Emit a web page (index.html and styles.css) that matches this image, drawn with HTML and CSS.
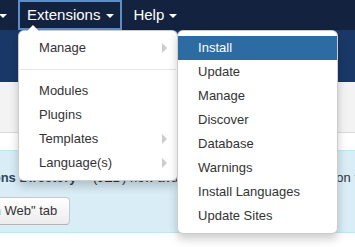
FILE: index.html
```html
<!DOCTYPE html>
<html lang="en">
<head>
<meta charset="utf-8">
<title>Extensions menu</title>
<link rel="stylesheet" href="styles.css">
</head>
<body>
<nav class="navbar">
  <ul class="nav">
    <li class="nav-item"><a class="nav-link">Components<span class="caret"></span></a></li>
    <li class="nav-item">
      <a class="nav-link active">Extensions<span class="caret"></span></a>
      <ul class="dropdown-menu menu-main">
        <li class="submenu"><a>Manage</a>
          <ul class="dropdown-menu menu-sub">
            <li class="hover"><a>Install</a></li>
            <li><a>Update</a></li>
            <li><a>Manage</a></li>
            <li><a>Discover</a></li>
            <li><a>Database</a></li>
            <li><a>Warnings</a></li>
            <li><a>Install Languages</a></li>
            <li><a>Update Sites</a></li>
          </ul>
        </li>
        <li class="divider"></li>
        <li><a>Modules</a></li>
        <li><a>Plugins</a></li>
        <li class="submenu"><a>Templates</a></li>
        <li class="submenu"><a>Language(s)</a></li>
      </ul>
    </li>
    <li class="nav-item"><a class="nav-link help">Help<span class="caret"></span></a></li>
  </ul>
</nav>
<header class="header"></header>
<div class="subhead"></div>
<main class="content">
  <div class="alert">
    <p class="alert-text"><strong>Joomla! Extensions Directory</strong>™&nbsp;(JED) now available with <a class="alert-link">Install from Web</a> on this page.</p>
    <button class="btn" type="button">Add "Install from Web" tab</button>
  </div>
</main>
</body>
</html>
```
FILE: styles.css
```css
* { box-sizing: border-box; }
html, body { margin: 0; padding: 0; }
body {
  width: 355px;
  height: 247px;
  overflow: hidden;
  font-family: "Liberation Sans", Arial, sans-serif;
  font-size: 13px;
  line-height: 18px;
  color: #333;
  background: #fff;
}

/* top navbar */
.navbar {
  height: 30px;
  background: #13233f;
  position: relative;
  z-index: 10;
}
.nav {
  list-style: none;
  margin: 0 0 0 -102px;
  padding: 0;
  display: flex;
  height: 30px;
}
.nav-item { position: relative; }
.nav-link {
  display: flex;
  align-items: center;
  height: 30px;
  padding: 0 11px 0 9px;
  color: #fff;
  font-size: 15px;
}
.nav-link .caret { margin-left: 7px; }
.nav-link.active {
  border: 2px solid #5d8ec6;
  padding: 0 6px 0 7px;
}
.nav-link.active .caret { margin-left: 6px; }
.nav-link.help { padding-left: 11px; }
.nav-link.help .caret { margin-left: 5px; }
.caret {
  width: 0;
  height: 0;
  margin-top: 2px;
  border-top: 4px solid #fff;
  border-left: 4px solid transparent;
  border-right: 4px solid transparent;
}

/* dropdowns */
.dropdown-menu {
  position: absolute;
  list-style: none;
  margin: 0;
  padding: 5px 0;
  background: #fff;
  border: 1px solid rgba(0, 0, 0, 0.2);
  border-radius: 6px;
  box-shadow: 0 5px 10px rgba(0, 0, 0, 0.2);
  z-index: 20;
}
.dropdown-menu li { position: relative; }
.dropdown-menu a {
  display: block;
  padding: 3px 20px;
  color: #333;
  white-space: nowrap;
}
.menu-main {
  top: 100%;
  left: 0;
  width: 160px;
}
.menu-main::before {
  content: "";
  position: absolute;
  top: -7px;
  left: 7px;
  border-left: 7px solid transparent;
  border-right: 7px solid transparent;
  border-bottom: 7px solid rgba(0, 0, 0, 0.2);
}
.menu-main::after {
  content: "";
  position: absolute;
  top: -6px;
  left: 8px;
  border-left: 6px solid transparent;
  border-right: 6px solid transparent;
  border-bottom: 6px solid #fff;
}
.menu-sub {
  top: -6px;
  left: 100%;
  width: 161px;
}
.submenu > a::after {
  content: "";
  position: absolute;
  top: 7px;
  right: 10px;
  border-top: 5px solid transparent;
  border-bottom: 5px solid transparent;
  border-left: 5px solid #ccc;
}
.dropdown-menu .hover > a {
  background: #2d6ca2;
  color: #fff;
}
.divider {
  height: 1px;
  margin: 9px 1px;
  background: #e5e5e5;
}

/* page bands */
.header {
  height: 52px;
  background: #1a3867;
}
.subhead {
  height: 51px;
  background: #f3f3f3;
  border-bottom: 1px solid #dadada;
}
.content { padding-top: 17px; }

.alert {
  margin-left: -122px;
  width: 620px;
  padding: 14px 14px 7px;
  background: #d9edf7;
  border: 1px solid #bce8f1;
  border-radius: 4px;
}
.alert-text {
  margin: 0 0 6px;
  line-height: 26px;
  white-space: nowrap;
  color: #333;
}
.alert-text strong { color: #2c4560; }
.alert-link { color: #2d6ca2; }
.btn {
  display: inline-block;
  padding: 4px 12px;
  font-family: "Liberation Sans", Arial, sans-serif;
  font-size: 13px;
  line-height: 18px;
  color: #333;
  background: linear-gradient(#ffffff, #ebebeb);
  border: 1px solid #c8c8c8;
  border-bottom-color: #b3b3b3;
  border-radius: 4px;
}
```
